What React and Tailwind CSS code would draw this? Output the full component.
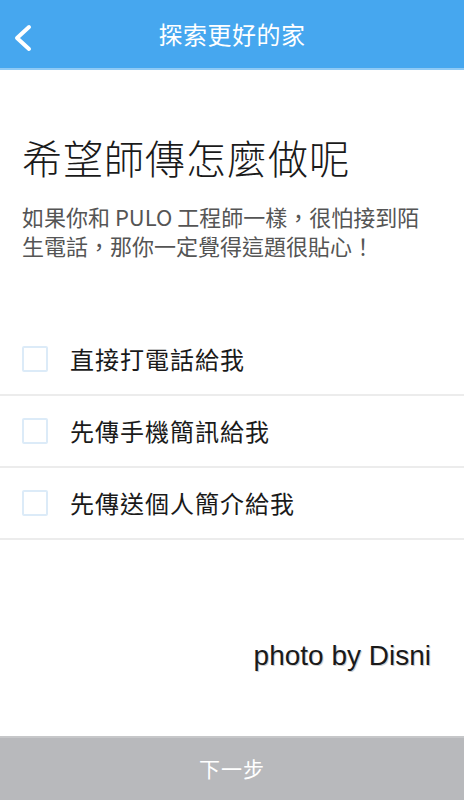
import React from 'react';

const font = { fontFamily: '"Noto Sans CJK TC", "Noto Sans", sans-serif' };

const options = ['直接打電話給我', '先傳手機簡訊給我', '先傳送個人簡介給我'];

const App = () => {
    return (
        <div className="w-[464px] h-[800px] flex flex-col bg-white overflow-hidden" style={font}>
            <header className="h-[70px] shrink-0 bg-[#46a7ef] border-b-2 border-[#8fcaf5] relative flex items-center justify-center">
                <svg className="absolute left-[12px] top-[24px]" width="22" height="28" viewBox="0 0 22 28" fill="none">
                    <path d="M17 3 L5 14 L17 25" stroke="white" strokeWidth="4" strokeLinecap="round" strokeLinejoin="round" />
                </svg>
                <h1 className="text-white text-[24px] font-normal tracking-[0.5px]">探索更好的家</h1>
            </header>

            <div className="px-[22px] mt-[63px]">
                <h2 className="text-[40px] leading-[48px] font-light text-[#1a1a1a] tracking-[1px]">希望師傳怎麼做呢</h2>
                <p className="mt-[21px] text-[22px] leading-[29px] text-[#555]">
                    如果你和 PULO 工程師一樣，很怕接到陌
                    <br />
                    生電話，那你一定覺得這題很貼心！
                </p>
            </div>

            <ul className="mt-[64px]">
                {options.map((o) => (
                    <li key={o} className="h-[72px] flex items-center border-b-2 border-[#ececec]">
                        <span className="ml-[22px] w-[26px] h-[26px] border-2 border-[#dcebf8] rounded-[2px]" />
                        <span className="ml-[22px] text-[24px] text-[#1a1a1a] tracking-[1px]">{o}</span>
                    </li>
                ))}
            </ul>

            <div className="flex-1 flex justify-end items-start pr-[33px] pt-[102px]">
                <span
                    className="text-[28px] text-[#1a1a1a] leading-none"
                    style={{ fontFamily: '"Liberation Sans", sans-serif', textShadow: '1px 1px 0 #d0d0d0' }}
                >
                    photo by Disni
                </span>
            </div>

            <button className="h-[64px] shrink-0 bg-[#b8b9bc] border-t-2 border-[#c6c7c9] text-white text-[21px] tracking-[1px]">
                下一步
            </button>
        </div>
    );
};

export default App;
